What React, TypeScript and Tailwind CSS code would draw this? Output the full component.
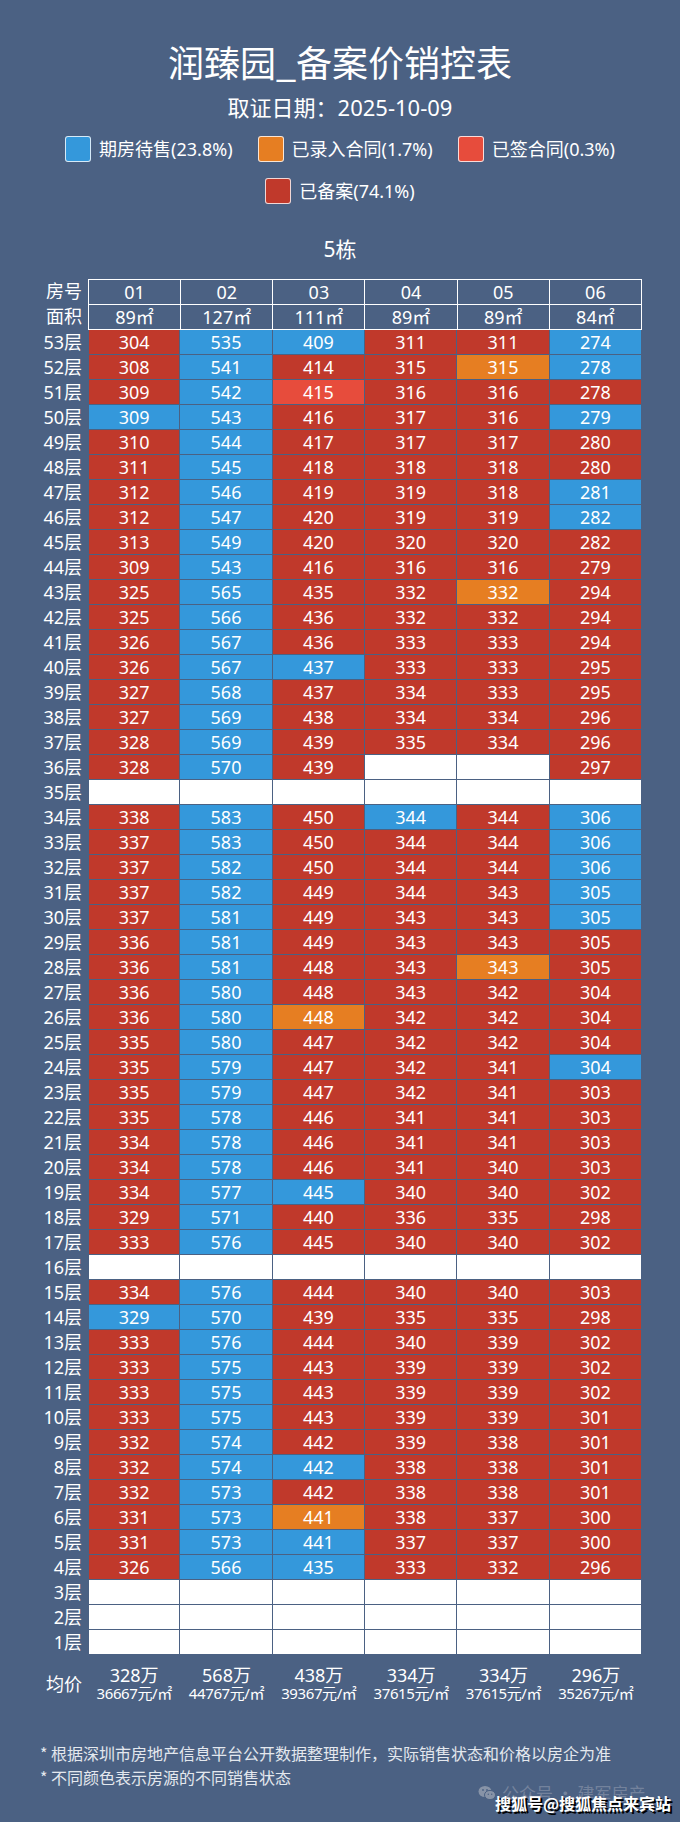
import React from "react";

type S = "R" | "B" | "O" | "S" | "W";

const raw: [number, string][] = [
  [53, "304R 535B 409B 311R 311R 274B"],
  [52, "308R 541B 414R 315R 315O 278B"],
  [51, "309R 542B 415S 316R 316R 278R"],
  [50, "309B 543B 416R 317R 316R 279B"],
  [49, "310R 544B 417R 317R 317R 280R"],
  [48, "311R 545B 418R 318R 318R 280R"],
  [47, "312R 546B 419R 319R 318R 281B"],
  [46, "312R 547B 420R 319R 319R 282B"],
  [45, "313R 549B 420R 320R 320R 282R"],
  [44, "309R 543B 416R 316R 316R 279R"],
  [43, "325R 565B 435R 332R 332O 294R"],
  [42, "325R 566B 436R 332R 332R 294R"],
  [41, "326R 567B 436R 333R 333R 294R"],
  [40, "326R 567B 437B 333R 333R 295R"],
  [39, "327R 568B 437R 334R 333R 295R"],
  [38, "327R 569B 438R 334R 334R 296R"],
  [37, "328R 569B 439R 335R 334R 296R"],
  [36, "328R 570B 439R W W 297R"],
  [35, "W W W W W W"],
  [34, "338R 583B 450R 344B 344R 306B"],
  [33, "337R 583B 450R 344R 344R 306B"],
  [32, "337R 582B 450R 344R 344R 306B"],
  [31, "337R 582B 449R 344R 343R 305B"],
  [30, "337R 581B 449R 343R 343R 305B"],
  [29, "336R 581B 449R 343R 343R 305R"],
  [28, "336R 581B 448R 343R 343O 305R"],
  [27, "336R 580B 448R 343R 342R 304R"],
  [26, "336R 580B 448O 342R 342R 304R"],
  [25, "335R 580B 447R 342R 342R 304R"],
  [24, "335R 579B 447R 342R 341R 304B"],
  [23, "335R 579B 447R 342R 341R 303R"],
  [22, "335R 578B 446R 341R 341R 303R"],
  [21, "334R 578B 446R 341R 341R 303R"],
  [20, "334R 578B 446R 341R 340R 303R"],
  [19, "334R 577B 445B 340R 340R 302R"],
  [18, "329R 571B 440R 336R 335R 298R"],
  [17, "333R 576B 445R 340R 340R 302R"],
  [16, "W W W W W W"],
  [15, "334R 576B 444R 340R 340R 303R"],
  [14, "329B 570B 439R 335R 335R 298R"],
  [13, "333R 576B 444R 340R 339R 302R"],
  [12, "333R 575B 443R 339R 339R 302R"],
  [11, "333R 575B 443R 339R 339R 302R"],
  [10, "333R 575B 443R 339R 339R 301R"],
  [9, "332R 574B 442R 339R 338R 301R"],
  [8, "332R 574B 442B 338R 338R 301R"],
  [7, "332R 573B 442R 338R 338R 301R"],
  [6, "331R 573B 441O 338R 337R 300R"],
  [5, "331R 573B 441B 337R 337R 300R"],
  [4, "326R 566B 435B 333R 332R 296R"],
  [3, "W W W W W W"],
  [2, "W W W W W W"],
  [1, "W W W W W W"],
];

const bgClass: Record<S, string> = {
  R: "bg-[#c0392b] text-white",
  B: "bg-[#3498db] text-white",
  O: "bg-[#e67e22] text-white",
  S: "bg-[#e74c3c] text-white",
  W: "bg-white",
};

const rows = raw.map(([floor, s]) => ({
  floor,
  cells: s.split(" ").map((t) => {
    if (t === "W") return { v: "", s: "W" as S };
    return { v: t.slice(0, -1), s: t.slice(-1) as S };
  }),
}));

const units = ["01", "02", "03", "04", "05", "06"];
const areas = ["89㎡", "127㎡", "111㎡", "89㎡", "89㎡", "84㎡"];
const avg: [string, string][] = [
  ["328万", "36667元/㎡"],
  ["568万", "44767元/㎡"],
  ["438万", "39367元/㎡"],
  ["334万", "37615元/㎡"],
  ["334万", "37615元/㎡"],
  ["296万", "35267元/㎡"],
];

const legend: { c: string; t: string }[] = [
  { c: "bg-[#3498db]", t: "期房待售(23.8%)" },
  { c: "bg-[#e67e22]", t: "已录入合同(1.7%)" },
  { c: "bg-[#e74c3c]", t: "已签合同(0.3%)" },
];

function LegendItem({ c, t }: { c: string; t: string }) {
  return (
    <div className="flex items-center gap-[8px]">
      <div className={`w-[26px] h-[26px] rounded-[3px] border border-white/80 ${c}`} />
      <span className="text-[18px] leading-[26px] text-white">{t}</span>
    </div>
  );
}

export default function App() {
  return (
    <div className="relative w-[680px] h-[1822px] bg-[#4b6183] font-['Noto_Sans','Noto_Sans_CJK_SC',sans-serif] text-white overflow-hidden">
      <div className="pt-[38px] text-center text-[36px] leading-[47px] font-['Noto_Sans_CJK_SC',sans-serif]">
        润臻园_备案价销控表
      </div>
      <div className="mt-[7px] text-center text-[22px] leading-[30px]">
        取证日期：2025-10-09
      </div>
      <div className="mt-[14px] flex justify-center gap-[25px]">
        {legend.map((l) => (
          <LegendItem key={l.t} c={l.c} t={l.t} />
        ))}
      </div>
      <div className="mt-[16px] flex justify-center">
        <LegendItem c="bg-[#c0392b]" t="已备案(74.1%)" />
      </div>
      <div className="mt-[31px] text-center text-[21px] leading-[28px]">5栋</div>

      <div className="mt-[16px] flex flex-col">
        <div className="flex">
          <div className="w-[82px] flex flex-col text-right text-[18px]">
            <div className="h-[25px] leading-[25px]">房号</div>
            <div className="h-[25px] leading-[25px]">面积</div>
          </div>
          <div className="ml-[6px] w-[554px] grid grid-cols-6 border-t border-l border-white">
            {units.map((u) => (
              <div key={u} className="h-[25px] border-r border-b border-white text-center text-[18px] leading-[24px]">
                {u}
              </div>
            ))}
            {areas.map((a, i) => (
              <div key={i} className="h-[25px] border-r border-b border-white text-center text-[18px] leading-[24px]">
                {a}
              </div>
            ))}
          </div>
        </div>
        {rows.map((r) => (
          <div key={r.floor} className="flex">
            <div className="w-[82px] h-[25px] text-right text-[18px] leading-[25px]">{r.floor}层</div>
            <div className="ml-[6px] w-[554px] grid grid-cols-6">
              {r.cells.map((c, i) => (
                <div
                  key={i}
                  className={`h-[25px] border-r border-b border-[#4b6183] text-center text-[18px] leading-[24px] ${
                    i === 0 ? "border-l" : ""
                  } ${bgClass[c.s]}`}
                >
                  {c.v}
                </div>
              ))}
            </div>
          </div>
        ))}
        <div className="mt-[10px] flex items-center">
          <div className="w-[82px] text-right text-[18px] leading-[24px]">均价</div>
          <div className="ml-[6px] w-[554px] grid grid-cols-6">
            {avg.map(([a, b], i) => (
              <div key={i} className="flex flex-col items-center">
                <div className="text-[18px] leading-[20px]">{a}</div>
                <div className="text-[15px] leading-[17px] tracking-[-0.4px] whitespace-nowrap">{b}</div>
              </div>
            ))}
          </div>
        </div>
      </div>

      <div className="mt-[39px] pl-[40px] text-[16px] leading-[24px] text-[#e4e8ee] font-['Noto_Sans_CJK_SC',sans-serif]">
        <div>* 根据深圳市房地产信息平台公开数据整理制作，实际销售状态和价格以房企为准</div>
        <div>* 不同颜色表示房源的不同销售状态</div>
      </div>

      <div className="absolute left-[478px] top-[1783px] flex items-center gap-[6px] text-[#7f8ca3]/80 text-[17px] leading-[20px] font-['Noto_Sans_CJK_SC',sans-serif]">
        <svg width="18" height="16" viewBox="0 0 18 16">
          <ellipse cx="7" cy="6.5" rx="6.5" ry="5.5" fill="#8793a7" />
          <ellipse cx="12" cy="10" rx="5.5" ry="4.6" fill="#8793a7" stroke="#4b6183" strokeWidth="1" />
          <circle cx="5" cy="5" r="0.9" fill="#4b6183" />
          <circle cx="9" cy="5" r="0.9" fill="#4b6183" />
          <circle cx="10.3" cy="9.2" r="0.7" fill="#4b6183" />
          <circle cx="13.7" cy="9.2" r="0.7" fill="#4b6183" />
        </svg>
        <span>公众号 · 建军房产</span>
      </div>
      <div className="absolute left-[495px] top-[1793px] text-[16px] leading-[20px] font-bold text-white [text-shadow:2px_2px_0_#000] font-['Noto_Sans_CJK_SC',sans-serif]">
        搜狐号@搜狐焦点来宾站
      </div>
    </div>
  );
}
